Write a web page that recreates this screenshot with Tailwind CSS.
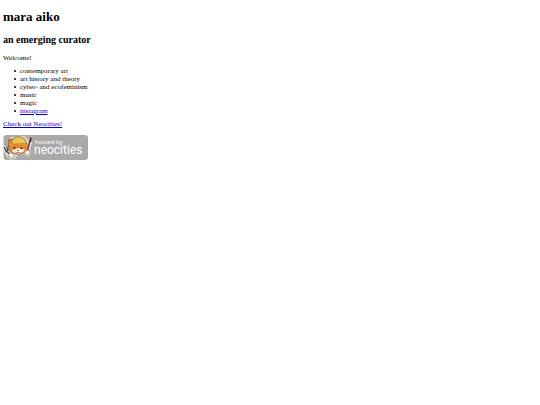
<!DOCTYPE html>
<html lang="en">
<head>
<meta charset="utf-8">
<meta name="viewport" content="width=device-width, initial-scale=1">
<title>mara aiko</title>
<script src="https://cdn.jsdelivr.net/npm/@tailwindcss/browser@4"></script>
</head>
<body class="bg-white px-[3px] pt-[9px] font-['Liberation_Serif','Times_New_Roman',serif] text-[7px] leading-[8px] text-black">
<h1 class="text-[13px] leading-4 font-bold">mara aiko</h1>
<h2 class="mt-[7px] text-[10px] leading-4 font-bold">an emerging curator</h2>
<p class="mt-[6px]">Welcome!</p>
<ul class="mt-[5px] pl-[11px]">
<li class="flex items-center gap-1 before:size-[2px] before:rounded-full before:bg-black">contemporary art</li>
<li class="flex items-center gap-1 before:size-[2px] before:rounded-full before:bg-black">art history and theory</li>
<li class="flex items-center gap-1 before:size-[2px] before:rounded-full before:bg-black">cyber- and ecofeminism</li>
<li class="flex items-center gap-1 before:size-[2px] before:rounded-full before:bg-black">music</li>
<li class="flex items-center gap-1 before:size-[2px] before:rounded-full before:bg-black">magic</li>
<li class="flex items-center gap-1 before:size-[2px] before:rounded-full before:bg-black"><a href="#instagram" class="text-[#0000ee] underline">instagram</a></li>
</ul>
<p class="mt-[5px]"><a href="#neocities" class="text-[#0000ee] underline">Check out Neocities!</a></p>
<p class="mt-[7px]">
<a href="#hosting" class="inline-block" aria-label="Hosted by Neocities">
<svg class="block" width="85" height="26" viewBox="0 0 85 26">
<rect x="0.5" y="0" width="84.5" height="25" rx="3.2" fill="#a9a9a9"/>
<!-- white edge around the cat -->
<path d="M5 4 8 2 12 2 17 .5 22 1.5 25 5 27 1 29 1 29 8 27 14 28 19 25 22 20 19 15 20 12 24 7 25 4 22 0 14 0 10 6 12 5 8Z" fill="#fff" opacity=".6"/>
<!-- fork -->
<path d="M1 12 3 16 8 20M3.5 11.5 5 15.5 3 16" fill="none" stroke="#535353" stroke-width="1.4"/>
<!-- brush -->
<path d="m24.5 16 2-9" stroke="#7e3540" stroke-width="1.5"/>
<path d="M26 7 27.5 1.5 28.7 3 28 7Z" fill="#752331" stroke="#39292b" stroke-width=".4"/>
<!-- head, ears and face -->
<path d="M5.3 10 5.7 4 9 4.3 13 3 20 4 23.7 8.5 25 13.5 21.5 17.5 15 19.5 9 18 5.7 14Z" fill="#e98432" stroke="#66513b" stroke-width=".7"/>
<path d="M8.5 15.5 11.5 14.5 15 13 18.5 14 22 14.5 20 17 15 19 10 17.2Z" fill="#fff2dc"/>
<path d="M8 8.5 9.5 4.5 13 2 18 1.8 22 4.5 23.8 9.3 18 8.4 13 9Z" fill="#efc452" stroke="#79622f" stroke-width=".7"/>
<path d="M7 9.5Q15 6.8 24.5 10.8" fill="none" stroke="#d9a72f" stroke-width="1.5"/>
<circle cx="11.5" cy="12.8" r="1" fill="#3d302b"/><circle cx="18.5" cy="13.3" r="1" fill="#3d302b"/>
<path d="m14 15 1 1 1-1m-3.5 2.2q2.5 1.3 4.5 0" fill="none" stroke="#654334" stroke-width=".7"/>
<!-- paws -->
<circle cx="8.3" cy="20.8" r="2.9" fill="#fff6e5" stroke="#8c7659" stroke-width=".6"/>
<circle cx="24.4" cy="18" r="2.7" fill="#fff6e5" stroke="#8c7659" stroke-width=".6"/>
<path d="m7 22.5.3-1.5m2 1.7-.2-1.5M23.5 19.7v-1.4m1.8 1.2-.2-1.3" stroke="#a98a6a" stroke-width=".5"/>
<text x="32" y="9" font-family="Open Sans, sans-serif" font-size="6" fill="#fff">hosted by</text>
<text x="31" y="19" font-family="Roboto, sans-serif" font-size="12" fill="#fff">neocities</text>
</svg>
</a>
</p>
</body>
</html>
